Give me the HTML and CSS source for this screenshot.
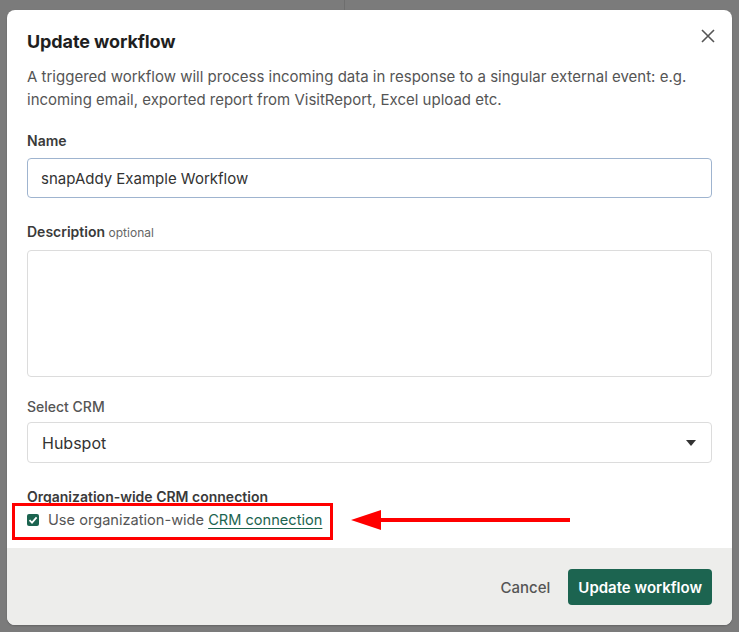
FILE: index.html
```html
<!DOCTYPE html>
<html lang="en">
<head>
    <meta charset="UTF-8">
    <meta name="viewport" content="width=device-width, initial-scale=1.0">
    <title>Update workflow</title>
    <link rel="stylesheet" href="styles.css">
</head>
<body>
    <div class="backdrop">
        <div class="backdrop-line"></div>
        <div class="modal">
            <div class="modal-body">
                <div class="modal-head">
                    <h2>Update workflow</h2>
                    <button class="close" aria-label="Close">
                        <svg width="16" height="16" viewBox="0 0 16 16"><path d="M2 2L14 14M14 2L2 14" stroke="#555" stroke-width="1.6" fill="none"/></svg>
                    </button>
                </div>
                <p class="intro">A triggered workflow will process incoming data in response to a singular external event: e.g. incoming email, exported report from VisitReport, Excel upload etc.</p>

                <label class="label" for="wfName">Name</label>
                <input type="text" id="wfName" class="input focused" value="snapAddy Example Workflow">

                <label class="label gap" for="wfDesc">Description <span class="optional">optional</span></label>
                <textarea id="wfDesc" class="input area"></textarea>

                <label class="label plain gap" for="wfCrm">Select CRM</label>
                <div class="select">
                    <span>Hubspot</span>
                    <svg width="12" height="8" viewBox="0 0 12 8"><path d="M1 1H11L6 7Z" fill="#333"/></svg>
                </div>

                <div class="label gap">Organization-wide CRM connection</div>
                <div class="check-row">
                    <span class="checkbox">
                        <svg width="10" height="10" viewBox="0 0 10 10"><path d="M1.5 5.2L4 7.6L8.6 2.4" stroke="#fff" stroke-width="1.8" fill="none"/></svg>
                    </span>
                    <span>Use organization-wide <a href="#">CRM connection</a></span>
                    <div class="highlight"></div>
                    <svg class="arrow" width="220" height="24" viewBox="0 0 220 24"><path d="M30 12H219" stroke="#f00" stroke-width="4"/><path d="M0 12L30 2V22Z" fill="#f00"/></svg>
                </div>
            </div>
            <div class="modal-foot">
                <button class="btn-cancel">Cancel</button>
                <button class="btn-primary">Update workflow</button>
            </div>
        </div>
    </div>
</body>
</html>
```

FILE: styles.css
```css
 body {
     margin: 0;
     font-family: Inter, "Noto Sans", sans-serif;
     background-color: #7b7b7b;
 }
 .backdrop {
     position: relative;
     padding: 10px 7px 6px 7px;
 }
 .backdrop-line {
     position: absolute;
     left: 344px;
     top: 0;
     width: 1px;
     height: 10px;
     background: #6e6e6e;
 }
 .modal {
     background: white;
     border-radius: 8px;
     overflow: hidden;
     box-shadow: 0 1px 2px rgba(0, 0, 0, 0.2);
 }
 .modal-body {
     padding: 20px 20px 18px 20px;
     position: relative;
 }
 .modal-head {
     display: flex;
     justify-content: space-between;
     align-items: center;
 }
 .modal-head h2 {
     margin: 0;
     font-size: 18px;
     line-height: 24px;
     font-weight: 700;
     color: #1f1f1f;
     letter-spacing: -0.1px;
 }
 .close {
     background: none;
     border: 0;
     padding: 0;
     margin-right: -4px;
     margin-top: -12px;
     display: flex;
 }
 .intro {
     margin: 11px 0 0;
     font-size: 15px;
     line-height: 23px;
     color: #555;
 }
 .label {
     display: block;
     margin-top: 20px;
     font-size: 14px;
     line-height: 20px;
     font-weight: 600;
     color: #3a3a3a;
 }
 .label.gap {
     margin-top: 24px;
 }
 .label.plain {
     font-weight: 500;
     color: #555;
     margin-top: 20px;
 }
 .optional {
     font-size: 12px;
     font-weight: 400;
     color: #666;
 }
 .input {
     display: block;
     box-sizing: border-box;
     width: 100%;
     margin-top: 7px;
     height: 40px;
     padding: 0 13px;
     border: 1px solid #dcdcdc;
     border-radius: 4px;
     font-family: inherit;
     font-size: 15px;
     color: #333;
     background: white;
 }
 .input.focused {
     border-color: #9fb4cf;
 }
 .input.area {
     height: 127px;
     resize: none;
 }
 .select {
     margin-top: 5px;
     height: 41px;
     box-sizing: border-box;
     border: 1px solid #dcdcdc;
     border-radius: 4px;
     display: flex;
     align-items: center;
     justify-content: space-between;
     padding: 0 14px 0 14px;
     font-size: 16px;
     color: #333;
 }
 .check-row {
     position: relative;
     display: flex;
     align-items: center;
     gap: 9px;
     margin-top: 3px;
     height: 20px;
     font-size: 14.6px;
     color: #555;
 }
 .check-row a {
     color: #1c6450;
     text-decoration: underline;
     text-underline-offset: 3px;
 }
 .checkbox {
     width: 12px;
     height: 12px;
     border-radius: 2px;
     background: #1c6450;
     display: flex;
     align-items: center;
     justify-content: center;
 }
 .highlight {
     position: absolute;
     left: -15px;
     top: -7px;
     width: 315px;
     height: 31px;
     border: 3px solid #f00;
 }
 .arrow {
     position: absolute;
     left: 324px;
     top: -2px;
 }
 .modal-foot {
     background: #ededeb;
     display: flex;
     justify-content: flex-end;
     align-items: center;
     gap: 18px;
     padding: 21px 20px 20px;
 }
 .btn-cancel {
     background: none;
     border: 0;
     font-family: inherit;
     font-size: 15px;
     font-weight: 500;
     color: #555;
     padding: 0;
 }
 .btn-primary {
     background: #1c6450;
     color: white;
     border: 0;
     border-radius: 4px;
     height: 36px;
     padding: 0 10px;
     font-family: inherit;
     font-size: 15px;
     font-weight: 600;
 }
```
